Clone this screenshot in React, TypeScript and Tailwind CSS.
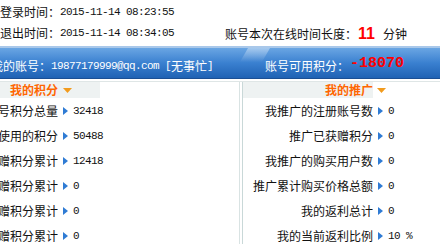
import React from 'react';

// Account points overview panel

const mono = "font-['Liberation_Mono',monospace] text-[11px] tracking-[-0.6px]";

const leftRows: Array<[string, string]> = [
  ['号积分总量', '32418'],
  ['使用的积分', '50488'],
  ['赠积分累计', '12418'],
  ['赠积分累计', '0'],
  ['赠积分累计', '0'],
  ['赠积分累计', '0'],
];

const rightRows: Array<[string, string]> = [
  ['我推广的注册账号数', '0'],
  ['推广已获赠积分', '0'],
  ['我推广的购买用户数', '0'],
  ['推广累计购买价格总额', '0'],
  ['我的返利总计', '0'],
  ['我的当前返利比例', '10 %'],
];

function RightArrow() {
  return (
    <svg width="5" height="8" viewBox="0 0 5 8" className="shrink-0">
      <path d="M0 0 L5 4 L0 8 Z" fill="#2f7bd4" />
    </svg>
  );
}

function DownArrow() {
  return (
    <svg width="9" height="5" viewBox="0 0 9 5" className="shrink-0">
      <path d="M0 0 H9 L4.5 5 Z" fill="#f29b1d" />
    </svg>
  );
}

function StatRow({ label, value, labelWidth }: { label: string; value: string; labelWidth: string }) {
  return (
    <div className="flex h-[25px] items-center">
      <div className={`flex shrink-0 justify-end overflow-hidden whitespace-nowrap ${labelWidth}`}>{label}</div>
      <div className="ml-[5px] flex items-center">
        <RightArrow />
      </div>
      <span className={`ml-[5px] whitespace-pre ${mono}`}>{value}</span>
    </div>
  );
}

export default function App() {
  return (
    <div className="relative h-[244px] w-[440px] overflow-hidden bg-white text-[12px] leading-[14px] text-[#111] font-['Noto_Sans_CJK_SC',sans-serif]">
      {/* login / logout times */}
      <div className="h-[46px]">
        <div className="flex h-[19px] items-center pt-[5px]">
          <span>登录时间：</span>
          <span className={mono}>2015-11-14 08:23:55</span>
        </div>
        <div className="mt-[7px] flex items-start">
          <div className="flex h-[14px] w-[225px] items-center">
            <span>退出时间：</span>
            <span className={mono}>2015-11-14 08:34:05</span>
          </div>
          <div className="mt-[-1px] flex h-[18px] items-center whitespace-nowrap">
            <span>账号本次在线时间长度：</span>
            <span className="ml-[1px] text-[16px] font-bold text-[#ff0000] font-['Liberation_Sans',sans-serif]">11</span>
            <span className="ml-[8px]">分钟</span>
          </div>
        </div>
      </div>

      {/* account bar */}
      <div className="relative h-[33px] border-t-2 border-b border-t-[#a9c8ea] border-b-[#1b4f94] bg-gradient-to-b from-[#6aa6e3] via-[#3a80d0] to-[#1f62b4] text-white">
        <div className="absolute left-[244px] top-0 h-[14px] w-[22px] -skew-x-[30deg] bg-gradient-to-b from-white/40 to-white/0" />
        <div className="relative flex h-full items-center pt-[5px] whitespace-nowrap">
          <div className="ml-[-9px] flex w-[274px] items-center">
            <span>我的账号：</span>
            <span className={mono}>19877179999@qq.com</span>
            <span className={`ml-[6px] ${mono}`}>[</span>
            <span>无事忙</span>
            <span className={mono}>]</span>
          </div>
          <span>账号可用积分：</span>
          <span className="ml-[1px] mt-[-3px] text-[15px] font-bold text-[#ff0000] font-['Liberation_Mono',monospace]">-18070</span>
        </div>
      </div>

      {/* stats columns */}
      <div className="mt-[2px] flex h-[164px] border-t border-[#dfe6e6]">
        <div className="w-[240px] shrink-0 border-r border-[#d9e3e3]">
          <div className="flex h-[16px] w-[100px] items-center bg-[#eef2f2]">
            <div className="flex w-[58px] justify-end font-bold text-[#ff6600] whitespace-nowrap">我的积分</div>
            <div className="ml-[5px]">
              <DownArrow />
            </div>
          </div>
          {leftRows.map(([label, value], i) => (
            <StatRow key={i} label={label} value={value} labelWidth="w-[58px]" />
          ))}
        </div>
        <div className="w-[2px] shrink-0" />
        <div className="flex-1 border-l border-[#c9d8d8]">
          <div className="flex h-[16px] items-center">
            <div className="flex h-full w-[130px] items-center justify-end bg-[#eef2f2] font-bold text-[#ff6600]">我的推广</div>
            <div className="ml-[4px]">
              <DownArrow />
            </div>
          </div>
          {rightRows.map(([label, value], i) => (
            <StatRow key={i} label={label} value={value} labelWidth="w-[130px]" />
          ))}
        </div>
      </div>
    </div>
  );
}
